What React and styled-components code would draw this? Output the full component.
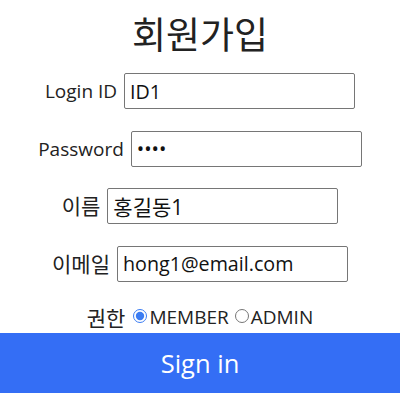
import React from 'react'
import styled, { createGlobalStyle } from 'styled-components';

const GlobalStyle = createGlobalStyle`
  body {
    margin: 0;
    background: #fff;
    font-family: "Open Sans", "Noto Sans CJK KR", sans-serif;
    color: #222;
  }
`;

const fields = [
  { label: 'Login ID', type: 'text', value: 'ID1' },
  { label: 'Password', type: 'password', value: '1234' },
  { label: '이름', type: 'text', value: '홍길동1', kr: true },
  { label: '이메일', type: 'text', value: 'hong1@email.com', kr: true },
];

const App = () => {
  return (
    <>
      <GlobalStyle />
      <Form onSubmit={(e) => e.preventDefault()}>
        <Title>회원가입</Title>
        <Fields>
          {fields.map((f) => (
            <Row key={f.label}>
              <Label $kr={f.kr}>{f.label}</Label>
              <Input type={f.type} defaultValue={f.value} $kr={f.kr && f.label === '이름'} />
            </Row>
          ))}
        </Fields>
        <RoleRow>
          <RoleLabel>권한</RoleLabel>
          <RadioLabel>
            <Radio type="radio" name="role" defaultChecked />MEMBER
          </RadioLabel>
          <RadioLabel>
            <Radio type="radio" name="role" />ADMIN
          </RadioLabel>
        </RoleRow>
        <SubmitButton type="submit">Sign in</SubmitButton>
      </Form>
    </>
  )
}

export default App;

export const Form = styled.form`
  width: 400px;
  display: flex;
  flex-direction: column;
`;

export const Title = styled.h1`
  margin: 0;
  height: 66px;
  line-height: 66px;
  font-size: 37px;
  font-weight: 400;
  text-align: center;
  font-family: "Noto Sans CJK KR", sans-serif;
  color: #222;
`;

export const Fields = styled.div`
  display: flex;
  flex-direction: column;
  gap: 21.5px;
  margin-top: 7px;
`;

export const Row = styled.div`
  display: flex;
  justify-content: center;
  align-items: center;
  gap: 7px;
  height: 36px;
`;

export const Label = styled.label`
  font-size: ${(p) => (p.$kr ? '21px' : '19px')};
  line-height: 26px;
`;

export const Input = styled.input`
  box-sizing: border-box;
  width: 231px;
  height: 36px;
  margin: 0;
  padding: 0 5px;
  border: 1px solid #767676;
  border-radius: 2px;
  font-family: "Open Sans", "Noto Sans CJK KR", sans-serif;
  font-size: ${(p) => (p.$kr ? '21px' : '19.7px')};
  color: #111;
  outline: none;
`;

export const RoleRow = styled.div`
  display: flex;
  justify-content: center;
  align-items: center;
  height: 24px;
  margin-top: 23.5px;
  font-size: 19px;
  gap: 6px;
`;

export const RoleLabel = styled.span`
  font-size: 21px;
  margin-right: 2px;
`;

export const RadioLabel = styled.label`
  display: flex;
  align-items: center;
`;

export const Radio = styled.input`
  width: 14px;
  height: 14px;
  margin: 0 2px 2px 0;
  accent-color: #3b7cf2;
`;

export const SubmitButton = styled.button`
  margin-top: 4px;
  height: 60px;
  border: none;
  background: #346ef5;
  color: #fff;
  font-family: "Open Sans", sans-serif;
  font-size: 25.5px;
  cursor: pointer;
`;
